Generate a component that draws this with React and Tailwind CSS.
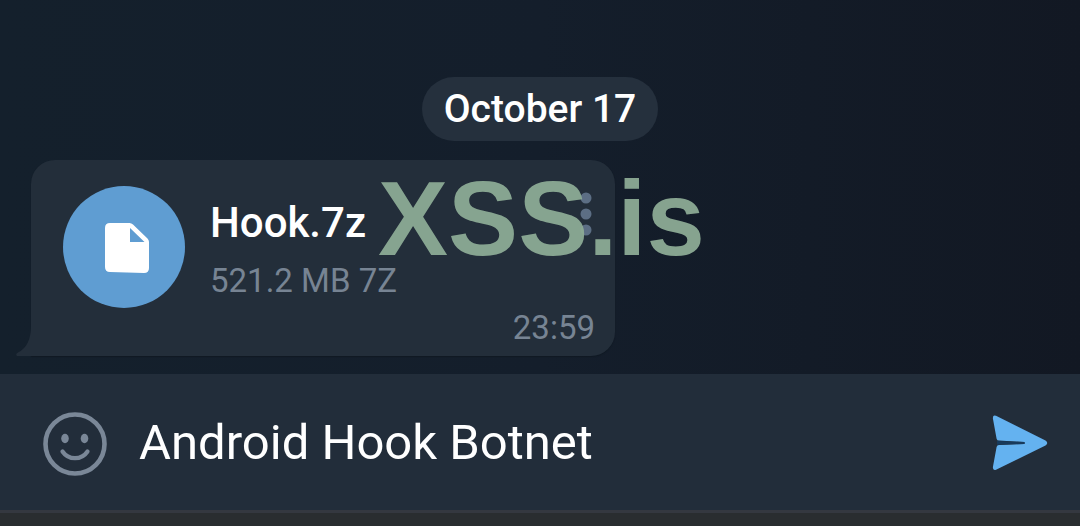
function FileIcon() {
  return (
    <svg viewBox="0 0 44 50" className="h-[50px] w-11" aria-hidden="true">
      <path
        fill="#fff"
        fillRule="evenodd"
        d="M5 0H24.500Q26.500 0 28 1.500L42.500 15.500Q44 17 44 19V45Q44 50 39 50L5 49Q0 49 0 44V5Q0 0 5 0ZM25 5V19H39.500Z"
      />
    </svg>
  );
}

function SmileIcon() {
  return (
    <svg viewBox="0 0 64 64" className="size-16" aria-hidden="true">
      <g fill="none" stroke="#7a8797">
        <circle cx="32" cy="32" r="29.500" strokeWidth="4.600" />
        <path d="M19.500 39.500Q24 46.200 32 46.200T44.500 39.500" strokeWidth="4.200" strokeLinecap="round" />
      </g>
      <ellipse cx="22" cy="26.500" rx="3.800" ry="4.700" fill="#7a8797" />
      <ellipse cx="41.500" cy="26.500" rx="3.800" ry="4.700" fill="#7a8797" />
    </svg>
  );
}

function SendIcon() {
  return (
    <svg viewBox="0 0 56 56" className="size-14" aria-hidden="true">
      <path
        fill="#64b2f0"
        d="M4 .8L53.500 25.500Q57 28 53.500 30.500L4 54.800Q.6 56 .9 52L4.600 32Q5 30.200 7 30.100L32.500 28.900V27L7 25.600Q5 25.500 4.600 23.700L.9 3.500Q.6 -.4 4 .8Z"
      />
      <path fill="#173a5c" d="M5 26L32.500 27V28.900L5 29.700Z" />
    </svg>
  );
}

function MoreIcon() {
  return (
    <svg viewBox="0 0 12 44" className="h-11 w-3" aria-hidden="true">
      <g fill="#5c6e84">
        <circle cx="6" cy="6" r="5.500" />
        <circle cx="6" cy="22" r="5.500" />
        <circle cx="6" cy="38" r="5.500" />
      </g>
    </svg>
  );
}

function FileMessage() {
  return (
    <article className="relative ml-[31px] w-[584px] max-w-[90%] rounded-3xl rounded-bl-none bg-[#232e3a] pt-[26px] pr-5 pb-2 pl-8 shadow-[0_1px_1px_#101923]">
      <svg viewBox="0 0 16 30" className="absolute bottom-0 -left-[15px] h-[30px] w-4" aria-hidden="true">
        <path fill="#232e3a" d="M15 0H16V30H1Q-1 28 2 26.500Q15 20 15 0Z" />
      </svg>
      <div className="flex items-start gap-[25px]">
        <button type="button" aria-label="Open file" className="flex size-[122px] shrink-0 items-center justify-center rounded-full bg-[#5f9dd2] pt-0.5 pl-1.5">
          <FileIcon />
        </button>
        <div className="flex-1 pt-[13px]">
          <h2 className="text-[42px] leading-[48px] font-medium text-white">Hook.7z</h2>
          <p className="pt-[14px] text-[33px] leading-10 text-[#778493]">521.2 MB 7Z</p>
        </div>
        <button type="button" aria-label="More options" className="mt-1.5 mr-[3px]">
          <MoreIcon />
        </button>
      </div>
      <time className="block text-right text-[33px] leading-10 text-[#778493]">23:59</time>
    </article>
  );
}

export default function App() {
  return (
    <div className="flex min-h-screen flex-col bg-[#292d30] font-[Roboto,sans-serif]">
      <main className="relative flex flex-1 flex-col justify-end overflow-hidden bg-linear-to-r from-[#14202c] via-[#141e2b] to-[#121823] pt-8 pb-[18px]">
        <div className="mb-[19px] self-center rounded-full bg-[#25303d] px-[22px] py-2 text-[39px] leading-[48px] font-medium text-white">
          October 17
        </div>
        <FileMessage />
        <div className="pointer-events-none absolute bottom-[55px] left-1/2 -translate-x-1/2 pl-[3px] font-['Liberation_Sans',sans-serif] text-[105px] leading-[200px] font-bold whitespace-nowrap text-[#8cab95]/95">
          XSS.is
        </div>
      </main>
      <form className="flex h-[136px] items-center gap-8 bg-[#222d3a] pr-8 pl-[43px]" onSubmit={(e) => e.preventDefault()}>
        <button type="button" aria-label="Emoji" className="pt-1">
          <SmileIcon />
        </button>
        <input
          aria-label="Message"
          defaultValue="Android Hook Botnet"
          className="h-16 min-w-0 flex-1 bg-transparent pt-0.5 text-[49px] text-white outline-none"
        />
        <button type="submit" aria-label="Send" className="pt-0.5">
          <SendIcon />
        </button>
      </form>
      <footer className="h-4 border-t-3 border-[#343840] bg-[#292d30]" />
    </div>
  );
}
